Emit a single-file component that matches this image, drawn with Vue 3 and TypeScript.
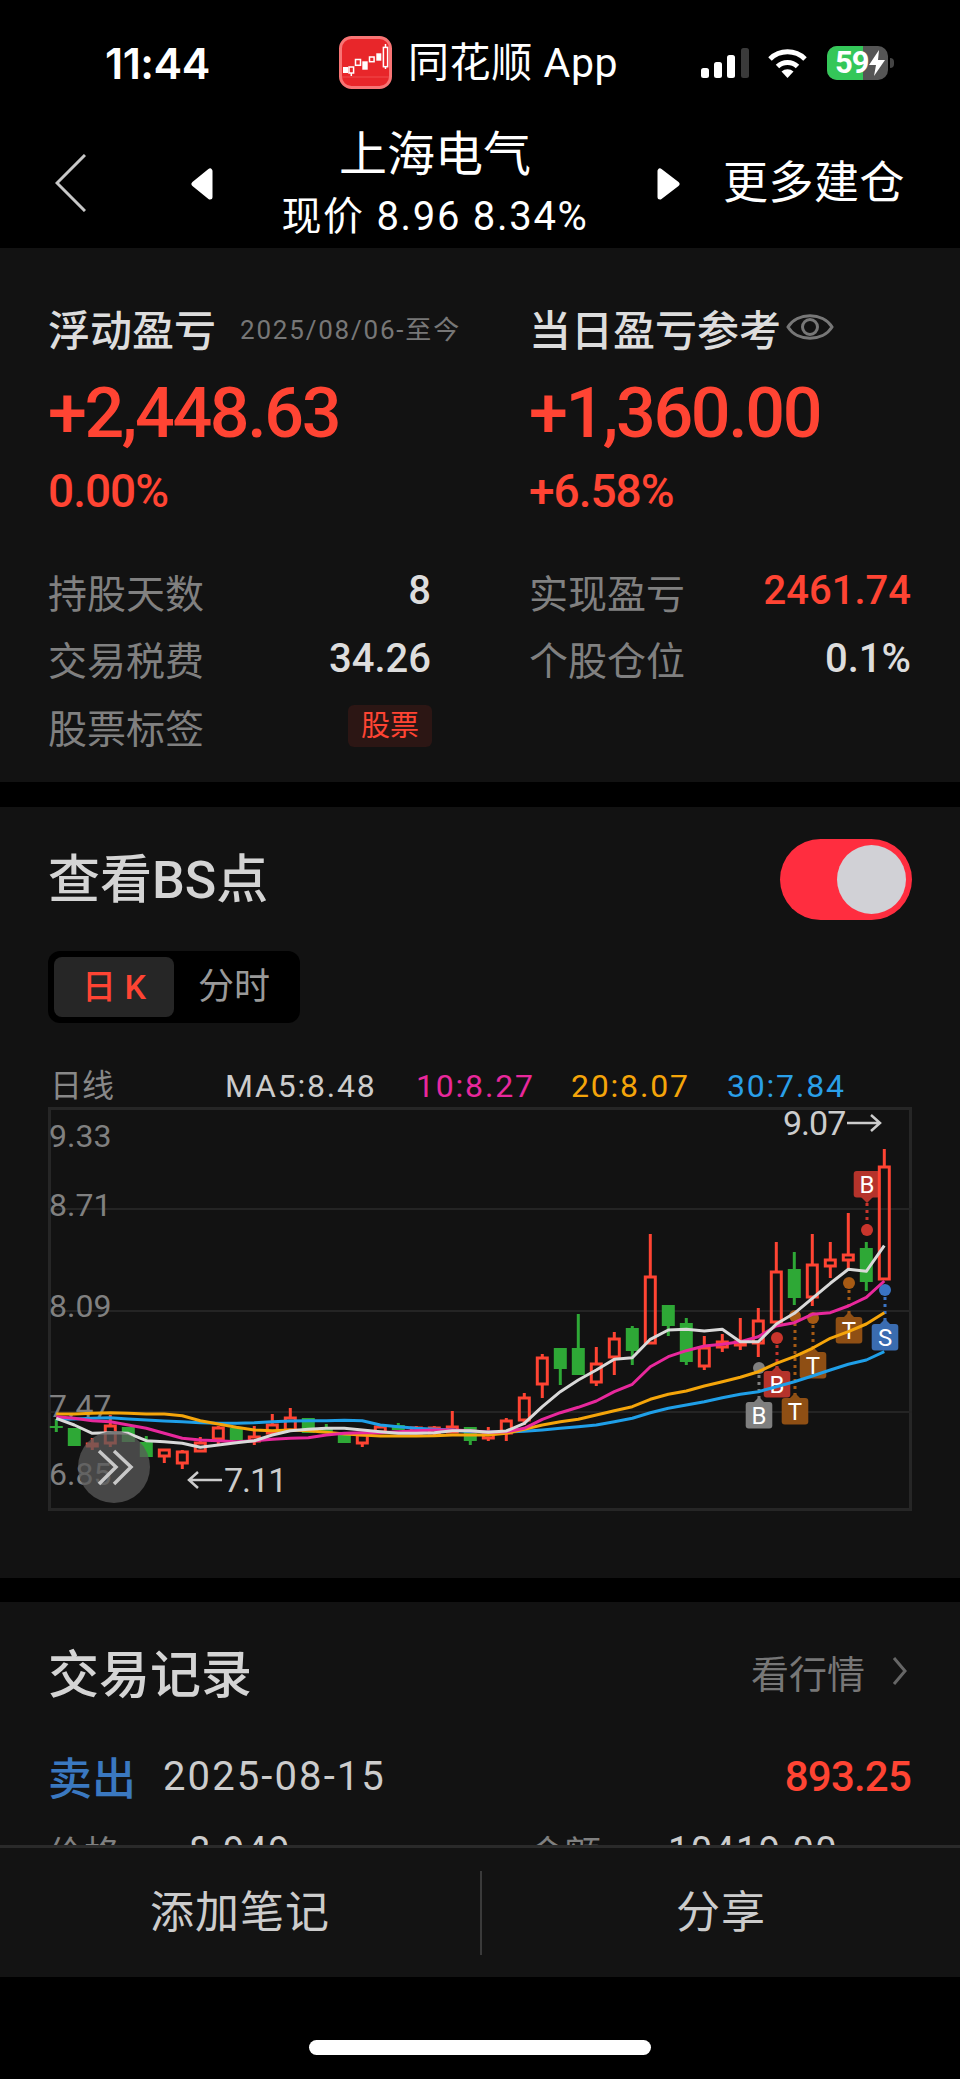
<script setup lang="ts">
interface Marker {
  label: string
  x: number
  boxTop: number
  dotY: number
  color: string
  dotColor: string
}

const RED = '#ff4433'
const GREEN = '#2ea836'

// top, bottom, high, low, up — page pixels, one row per trading day
const days: [number, number, number, number, boolean][] = [
  [1426, 1428, 1419, 1432, false], [1428, 1446, 1428, 1446, false], [1444, 1446, 1438, 1450, true],
  [1426, 1443, 1415, 1447, true], [1427, 1442, 1427, 1442, false], [1442, 1457, 1436, 1457, false],
  [1450, 1456, 1450, 1463, true], [1452, 1463, 1450, 1469, true], [1443, 1451, 1437, 1451, true],
  [1428, 1439, 1426, 1444, true], [1428, 1440, 1428, 1440, false], [1437, 1441, 1426, 1445, true],
  [1425, 1433, 1414, 1435, true], [1418, 1430, 1408, 1432, true], [1418, 1433, 1418, 1433, false],
  [1427, 1433, 1424, 1433, false], [1433, 1443, 1433, 1443, false], [1435, 1443, 1435, 1447, true],
  [1427, 1432, 1427, 1432, true], [1425, 1430, 1423, 1430, false], [1428, 1433, 1426, 1433, true],
  [1428, 1433, 1426, 1435, true], [1427, 1432, 1411, 1433, true], [1427, 1441, 1427, 1445, false],
  [1433, 1438, 1427, 1441, true], [1421, 1433, 1418, 1441, true], [1398, 1420, 1393, 1425, true],
  [1358, 1384, 1354, 1398, true], [1348, 1369, 1348, 1385, false], [1348, 1375, 1314, 1375, false],
  [1364, 1382, 1347, 1386, true], [1339, 1357, 1332, 1375, true], [1328, 1351, 1326, 1365, false],
  [1277, 1343, 1234, 1343, true], [1305, 1326, 1305, 1336, false], [1323, 1362, 1318, 1365, false],
  [1348, 1366, 1336, 1370, true], [1342, 1347, 1334, 1352, true], [1342, 1345, 1318, 1350, true],
  [1321, 1343, 1308, 1357, true], [1272, 1322, 1242, 1322, true], [1269, 1298, 1252, 1305, false],
  [1265, 1297, 1234, 1306, true], [1260, 1266, 1242, 1278, true], [1255, 1260, 1213, 1270, true],
  [1248, 1282, 1242, 1291, false], [1167, 1279, 1149, 1279, true],
]

const candles = days.map(([top, bottom, high, low, up], i) => ({
  x: 56.3 + 18 * i,
  top,
  bottom,
  high,
  low,
  up,
}))

function line(first: number[], second: number[]) {
  const ys = [...first.map((v) => 1050 + v / 3), ...second.map((v) => 1100 + v / 3)]
  return ys.map((y, i) => `${(56.3 + 18 * i).toFixed(1)},${y.toFixed(1)}`).join(' ')
}

const averages = [
  {
    color: '#1f9fe8',
    points: line(
      [1107, 1107, 1105, 1103, 1107, 1110, 1113, 1115, 1118, 1120, 1120, 1118, 1115, 1113, 1112, 1112, 1111, 1112, 1125, 1130, 1135, 1138, 1140, 1145],
      [996, 996, 994, 990, 985, 980, 975, 965, 955, 938, 925, 915, 905, 893, 883, 875, 860, 845, 828, 810, 793, 780, 755],
    ),
  },
  {
    color: '#f5a50a',
    points: line(
      [1092, 1092, 1090, 1088, 1090, 1092, 1092, 1097, 1112, 1122, 1132, 1140, 1142, 1140, 1142, 1147, 1152, 1155, 1158, 1158, 1158, 1157, 1155, 1155],
      [1005, 1000, 988, 975, 965, 958, 945, 932, 920, 898, 883, 873, 858, 845, 832, 815, 790, 770, 745, 715, 695, 672, 638],
    ),
  },
  {
    color: '#e8289c',
    points: line(
      [1100, 1105, 1112, 1115, 1125, 1135, 1150, 1165, 1170, 1172, 1175, 1172, 1168, 1165, 1163, 1155, 1150, 1148, 1148, 1145, 1142, 1140, 1140, 1142],
      [997, 995, 985, 958, 938, 922, 903, 875, 853, 800, 770, 752, 738, 733, 725, 710, 678, 668, 643, 638, 618, 592, 543],
    ),
  },
  {
    color: '#d9d9d9',
    points: line(
      [1105, 1125, 1150, 1148, 1150, 1172, 1175, 1180, 1192, 1185, 1178, 1172, 1155, 1142, 1138, 1135, 1135, 1140, 1145, 1150, 1150, 1148, 1142, 1142],
      [997, 993, 970, 920, 875, 840, 810, 778, 773, 718, 690, 688, 693, 688, 725, 725, 672, 640, 595, 550, 508, 514, 437],
    ),
  },
]

const markers: Marker[] = [
  { label: 'B', x: 759, boxTop: 1402, dotY: 1368, color: '#7f7f7f', dotColor: '#7f7f7f' },
  { label: 'B', x: 777, boxTop: 1371, dotY: 1338, color: '#b5332b', dotColor: '#c9352c' },
  { label: 'T', x: 795, boxTop: 1398, dotY: 1316, color: '#8f4f14', dotColor: '#a65a14' },
  { label: 'T', x: 813, boxTop: 1352, dotY: 1318, color: '#8f4f14', dotColor: '#a65a14' },
  { label: 'T', x: 849, boxTop: 1317, dotY: 1283, color: '#8f4f14', dotColor: '#a65a14' },
  { label: 'S', x: 885, boxTop: 1324, dotY: 1290, color: '#3a6cb0', dotColor: '#3a74c4' },
]

const yLabels = [
  { text: '9.33', y: 1147 },
  { text: '8.71', y: 1216 },
  { text: '8.09', y: 1317 },
  { text: '7.47', y: 1417 },
  { text: '6.85', y: 1485 },
]
</script>

<template>
  <div class="page">
    <div class="status">
      <span class="time">11:44</span>
      <svg class="logo" width="53" height="53" viewBox="0 0 53 53">
        <rect x="1.5" y="1.5" width="50" height="50" rx="11" fill="#e8262a" stroke="#f87474" stroke-width="3" />
        <path d="M3 41H50" stroke="#f04a4c" stroke-width="1" />
        <g fill="#fff">
          <rect x="4" y="31" width="5" height="6" />
          <rect x="23.3" y="25.3" width="5.4" height="8.4" />
          <rect x="37.3" y="17.3" width="5" height="7.4" />
        </g>
        <g fill="none" stroke="#fff" stroke-width="1.5">
          <rect x="10" y="31" width="4.6" height="6" />
          <rect x="16.5" y="23.5" width="5" height="5.8" />
          <rect x="30.5" y="21" width="4.6" height="4.7" />
          <rect x="44.4" y="11.4" width="4.2" height="19.3" />
          <path d="M46.5 8V11M46.5 31V33M12.3 37V40" />
        </g>
      </svg>
      <span class="app-name">同花顺 App</span>
      <svg class="signal" width="48" height="30" viewBox="0 0 48 30">
        <rect x="0" y="20" width="8" height="10" rx="2.5" fill="#fff" />
        <rect x="13" y="14" width="8" height="16" rx="2.5" fill="#fff" />
        <rect x="26" y="7" width="8" height="23" rx="2.5" fill="#fff" />
        <rect x="40" y="0" width="8" height="30" rx="2.5" fill="#3a3a3a" />
      </svg>
      <svg class="wifi" width="41" height="30" viewBox="0 0 41 30">
        <path d="M3 11A25 25 0 0 1 38 11M10.5 18.5A14.5 14.5 0 0 1 30.5 18.5" fill="none" stroke="#fff" stroke-width="5" />
        <path d="M14.5 23.5A9 9 0 0 1 26.5 23.5L20.5 30Z" fill="#fff" />
      </svg>
      <div class="battery">
        <span class="battery-fill"></span>
        <span class="battery-level">59</span>
        <svg class="bolt" width="18" height="26" viewBox="0 0 18 26">
          <path d="M11 0L1 15H8L6 26L17 10H10Z" fill="#fff" />
        </svg>
      </div>
      <span class="nub"></span>
    </div>

    <div class="nav">
      <svg class="back" width="31" height="58" viewBox="0 0 31 58">
        <path d="M30 1L2 29L30 57" fill="none" stroke="#c8c8c8" stroke-width="3" />
      </svg>
      <svg class="tri-left" width="23" height="32" viewBox="0 0 23 32">
        <path d="M20 3V29L4 16Z" fill="#fff" stroke="#fff" stroke-width="5" stroke-linejoin="round" />
      </svg>
      <div class="nav-title">
        <div class="stock">上海电气</div>
        <div class="quote">现价 8.96 8.34%</div>
      </div>
      <svg class="tri-right" width="24" height="32" viewBox="0 0 24 32">
        <path d="M3 3V29L20 16Z" fill="#fff" stroke="#fff" stroke-width="5" stroke-linejoin="round" />
      </svg>
      <span class="more">更多建仓</span>
    </div>

    <section class="card summary">
      <div class="col">
        <div class="heading">
          <span class="heading-text">浮动盈亏</span>
          <span class="range">2025/08/06-至今</span>
        </div>
        <div class="big">+2,448.63</div>
        <div class="pct">0.00%</div>
        <div class="rows">
          <div class="row"><span class="key">持股天数</span><span class="val">8</span></div>
          <div class="row"><span class="key">交易税费</span><span class="val">34.26</span></div>
          <div class="row"><span class="key">股票标签</span><span class="tag">股票</span></div>
        </div>
      </div>
      <div class="col">
        <div class="heading">
          <span class="heading-text">当日盈亏参考</span>
          <svg class="eye" width="48" height="34" viewBox="0 0 48 34">
            <path d="M2 17C11 2 37 2 46 17C37 32 11 32 2 17Z" fill="none" stroke="#777" stroke-width="3" />
            <circle cx="24" cy="17" r="7.5" fill="none" stroke="#777" stroke-width="3" />
          </svg>
        </div>
        <div class="big">+1,360.00</div>
        <div class="pct">+6.58%</div>
        <div class="rows">
          <div class="row"><span class="key">实现盈亏</span><span class="val up">2461.74</span></div>
          <div class="row"><span class="key">个股仓位</span><span class="val">0.1%</span></div>
        </div>
      </div>
    </section>

    <section class="card points">
      <div class="points-head">
        <h2 class="title">查看BS点</h2>
        <div class="toggle"><span class="knob"></span></div>
      </div>
      <div class="tabs">
        <span class="tab active">日 K</span>
        <span class="tab">分时</span>
      </div>
      <div class="legend">
        <span class="legend-name">日线</span>
        <span class="ma5">MA5:8.48</span>
        <span class="ma10">10:8.27</span>
        <span class="ma20">20:8.07</span>
        <span class="ma30">30:7.84</span>
      </div>
      <svg class="chart" width="864" height="404" viewBox="48 1107 864 404">
        <rect x="49.5" y="1108.5" width="861" height="401" fill="none" stroke="#262626" stroke-width="3" />
        <path d="M48 1209H912M48 1311H912M48 1412H912" stroke="#242424" stroke-width="2" />
        <text v-for="l in yLabels" :key="l.text" class="axis" x="49" :y="l.y">{{ l.text }}</text>

        <g v-for="(m, i) in markers" :key="i">
          <path :d="`M${m.x} ${m.dotY}V${m.boxTop}`" :stroke="m.dotColor" stroke-width="3" stroke-dasharray="3 4" />
          <circle :cx="m.x" :cy="m.dotY" r="6" :fill="m.dotColor" />
          <path :d="`M${m.x} ${m.boxTop - 5}L${m.x + 6} ${m.boxTop + 1}H${m.x - 6}Z`" :fill="m.color" />
          <rect :x="m.x - 13.3" :y="m.boxTop" width="26.6" height="26.4" rx="3" :fill="m.color" />
          <text class="mark" :x="m.x" :y="m.boxTop + 22">{{ m.label }}</text>
        </g>
        <!-- this one hangs above its dot -->
        <path d="M867 1203V1230" stroke="#c9352c" stroke-width="3" stroke-dasharray="3 4" />
        <circle cx="867" cy="1230" r="6" fill="#c9352c" />
        <path d="M867 1203L873 1197H861Z" fill="#b5332b" />
        <rect x="853.7" y="1171" width="26.6" height="26.4" rx="3" fill="#b5332b" />
        <text class="mark" x="867" y="1193">B</text>

        <g v-for="(c, i) in candles" :key="i">
          <template v-if="c.up">
            <path :d="`M${c.x} ${c.high}V${c.top}M${c.x} ${c.bottom}V${c.low}`" :stroke="RED" stroke-width="3" />
            <rect :x="c.x - 5" :y="c.top" width="10" :height="c.bottom - c.top" fill="none" :stroke="RED" stroke-width="3" />
          </template>
          <template v-else>
            <path :d="`M${c.x} ${c.high}V${c.low}`" :stroke="GREEN" stroke-width="3" />
            <rect :x="c.x - 6.5" :y="c.top" width="13" :height="c.bottom - c.top" :fill="GREEN" />
          </template>
        </g>

        <polyline
          v-for="a in averages"
          :key="a.color"
          :points="a.points"
          fill="none"
          :stroke="a.color"
          stroke-width="3"
          stroke-linejoin="round"
        />

        <path d="M222 1480H190M198 1472L189 1480L198 1488" fill="none" stroke="#ccc" stroke-width="2.5" />
        <text class="price" x="224" y="1492">7.11</text>
        <text class="price" x="783" y="1135">9.07</text>
        <path d="M847 1123H879M871 1115L880 1123L871 1131" fill="none" stroke="#ccc" stroke-width="2.5" />

        <circle cx="114" cy="1467" r="36" fill="#5a5a5a" fill-opacity="0.75" />
        <path d="M99 1451L116 1467L99 1484M114 1451L131 1467L114 1484" fill="none" stroke="#c8c8c8" stroke-width="3.5" />
      </svg>
    </section>

    <section class="card records">
      <div class="records-head">
        <h2 class="title">交易记录</h2>
        <span class="market">看行情</span>
        <svg class="chevron" width="15" height="28" viewBox="0 0 15 28">
          <path d="M2 1L13 14L2 27" fill="none" stroke="#666" stroke-width="3" />
        </svg>
      </div>
      <div class="trade">
        <span class="side">卖出</span>
        <span class="date">2025-08-15</span>
        <span class="profit">893.25</span>
      </div>
      <div class="detail">
        <span class="detail-key">价格</span>
        <span class="detail-val">8.949</span>
        <span class="detail-key second">金额</span>
        <span class="detail-val">10419.00</span>
      </div>
    </section>

    <div class="actions">
      <span class="action">添加笔记</span>
      <span class="action">分享</span>
    </div>

    <div class="home"><span class="home-bar"></span></div>
  </div>
</template>

<style>
body {
  background: #000;
}
</style>

<style scoped>
.page {
  width: 960px;
  height: 2079px;
  overflow: hidden;
  background: #000;
  font-family: Roboto, "Noto Sans CJK SC", sans-serif;
  color: #ddd;
}

/* status bar */
.status {
  height: 100px;
  display: flex;
  align-items: center;
  padding: 25px 0 0 105px;
  box-sizing: border-box;
  color: #fff;
}

.time {
  width: 234px;
  font-family: Inter, sans-serif;
  font-size: 43px;
  font-weight: 600;
  letter-spacing: -0.5px;
}

.app-name {
  width: 293px;
  margin-left: 16px;
  font-size: 41px;
  line-height: 48px;
  letter-spacing: 0.6px;
  white-space: nowrap;
}

.wifi {
  margin-left: 18px;
}

.battery {
  position: relative;
  margin-left: 19px;
  width: 61px;
  height: 34px;
  display: flex;
  align-items: center;
  border-radius: 10px;
  overflow: hidden;
  background: #555;
}

.battery-fill {
  position: absolute;
  left: 0;
  top: 0;
  bottom: 0;
  width: 36px;
  background: #34c759;
}

.battery-level {
  position: relative;
  margin-left: 8px;
  font-size: 31px;
  font-weight: 700;
  line-height: 34px;
  letter-spacing: -1px;
}

.bolt {
  position: relative;
  margin-left: -1px;
}

.nub {
  width: 4px;
  height: 10px;
  margin-left: 2px;
  border-radius: 0 4px 4px 0;
  background: #444;
}

/* nav */
.nav {
  height: 148px;
  display: flex;
  align-items: center;
  padding-left: 55px;
  color: #fff;
}

.back {
  margin-top: 17px;
}

.tri-left {
  margin: 20px 0 0 104px;
}

.tri-right {
  margin-top: 20px;
}

.nav-title {
  width: 444px;
  margin-top: 24px;
  text-align: center;
}

.stock {
  font-size: 48px;
  line-height: 56px;
  margin-top: -6px;
}

.quote {
  margin-top: 12px;
  font-size: 40px;
  line-height: 44px;
  letter-spacing: 1.7px;
}

.more {
  margin: 20px 0 0 42px;
  font-size: 45px;
  line-height: 56px;
  letter-spacing: 0.5px;
  white-space: nowrap;
}

/* cards */
.card {
  background: #121212;
  box-sizing: border-box;
}

.summary {
  height: 534px;
  padding: 54px 0 0 48px;
  display: grid;
  grid-template-columns: 383px 382px;
  column-gap: 98px;
}

.heading {
  display: flex;
  align-items: center;
  height: 50px;
  white-space: nowrap;
}

.heading-text {
  font-size: 42px;
  font-weight: 500;
  color: #ddd;
}

.range {
  margin-left: 24px;
  font-size: 26px;
  letter-spacing: 1.8px;
  color: #777;
}

.eye {
  margin-left: 5px;
}

.big {
  margin-top: 21px;
  font-size: 70px;
  font-weight: 500;
  line-height: 80px;
  letter-spacing: -2.4px;
  color: #ff4433;
}

.pct {
  margin-top: 13px;
  font-size: 46px;
  font-weight: 500;
  line-height: 50px;
  letter-spacing: -1px;
  color: #ff4433;
}

.rows {
  margin-top: 41px;
}

.row {
  height: 67.5px;
  display: flex;
  align-items: center;
  justify-content: space-between;
}

.key {
  font-size: 39px;
  color: #808080;
}

.val {
  font-size: 40px;
  font-weight: 500;
  color: #ddd;
}

.val.up {
  color: #ff4433;
}

.tag {
  width: 84px;
  height: 42px;
  margin-right: -1px;
  border-radius: 6px;
  background: #2c1614;
  color: #ff4433;
  font-size: 29px;
  line-height: 42px;
  text-align: center;
}

.points {
  height: 771px;
  margin-top: 25px;
  padding: 32px 48px 0;
}

.points-head {
  height: 81px;
  display: flex;
  align-items: center;
  justify-content: space-between;
}

.title {
  margin: -8px 0 0;
  font-size: 52px;
  font-weight: 500;
  color: #d4d4d4;
}

.toggle {
  width: 132px;
  height: 81px;
  padding: 6px 6px 6px 0;
  box-sizing: border-box;
  display: flex;
  justify-content: flex-end;
  border-radius: 41px;
  background: #ff2d3f;
}

.knob {
  width: 69px;
  height: 69px;
  border-radius: 50%;
  background: #d1d1d6;
}

.tabs {
  width: 252px;
  height: 72px;
  margin-top: 31px;
  padding: 6px;
  box-sizing: border-box;
  display: flex;
  border-radius: 12px;
  background: #000;
}

.tab {
  width: 120px;
  font-size: 36px;
  line-height: 60px;
  text-align: center;
  color: #999;
}

.tab.active {
  border-radius: 8px;
  background: #262626;
  color: #ff4433;
  font-size: 34px;
  font-weight: 500;
}

.legend {
  margin-top: 43px;
  padding-left: 2px;
  display: grid;
  grid-template-columns: 175px 191px 155px 156px auto;
  font-size: 32px;
  line-height: 40px;
  letter-spacing: 1.8px;
  white-space: nowrap;
}

.legend-name {
  color: #888;
  letter-spacing: 0;
}

.ma5 {
  color: #ccc;
}

.ma10 {
  color: #e8289c;
}

.ma20 {
  color: #f5a50a;
}

.ma30 {
  color: #2a9fe8;
}

.chart {
  display: block;
  margin-top: 1px;
}

.axis {
  font-size: 32px;
  fill: #808080;
}

.mark {
  font-size: 24px;
  fill: #fff;
  text-anchor: middle;
}

.price {
  font-size: 34px;
  letter-spacing: -1px;
  fill: #ccc;
}

.records {
  height: 243px;
  margin-top: 24px;
  padding: 39px 49px 0 48px;
  overflow: hidden;
}

.records-head {
  height: 60px;
  display: flex;
  align-items: center;
}

.records-head .title {
  margin: 0;
  font-size: 51px;
}

.market {
  margin-left: auto;
  font-size: 38px;
  color: #777;
}

.chevron {
  margin-left: 27px;
  margin-right: 4px;
}

.trade {
  margin-top: 45px;
  height: 60px;
  display: flex;
  align-items: center;
}

.side {
  font-size: 44px;
  font-weight: 500;
  color: #3a78c0;
}

.date {
  margin-left: 27px;
  font-size: 40px;
  letter-spacing: 2.1px;
  color: #ccc;
}

.profit {
  margin-left: auto;
  font-size: 42px;
  font-weight: 500;
  letter-spacing: -0.8px;
  color: #ff4433;
}

.detail {
  margin-top: 20px;
  display: flex;
  align-items: center;
  height: 50px;
  white-space: nowrap;
}

.detail-key {
  width: 141px;
  font-size: 36px;
  color: #808080;
}

.detail-key.second {
  width: 139px;
  margin-left: 240px;
}

.detail-val {
  width: 100px;
  font-size: 38px;
  letter-spacing: 1.3px;
  color: #ccc;
}

/* bottom bar */
.actions {
  height: 132px;
  display: grid;
  grid-template-columns: 480px 480px;
  align-items: center;
  box-sizing: border-box;
  border-top: 3px solid #2a2a2a;
  background: #131313;
}

.action {
  font-size: 44px;
  line-height: 84px;
  letter-spacing: 1px;
  text-align: center;
  color: #ccc;
}

.action + .action {
  border-left: 2px solid #3a3a3a;
}

.home {
  height: 102px;
  padding-top: 63px;
  box-sizing: border-box;
  display: flex;
  justify-content: center;
}

.home-bar {
  width: 342px;
  height: 15px;
  border-radius: 8px;
  background: #fff;
}
</style>
